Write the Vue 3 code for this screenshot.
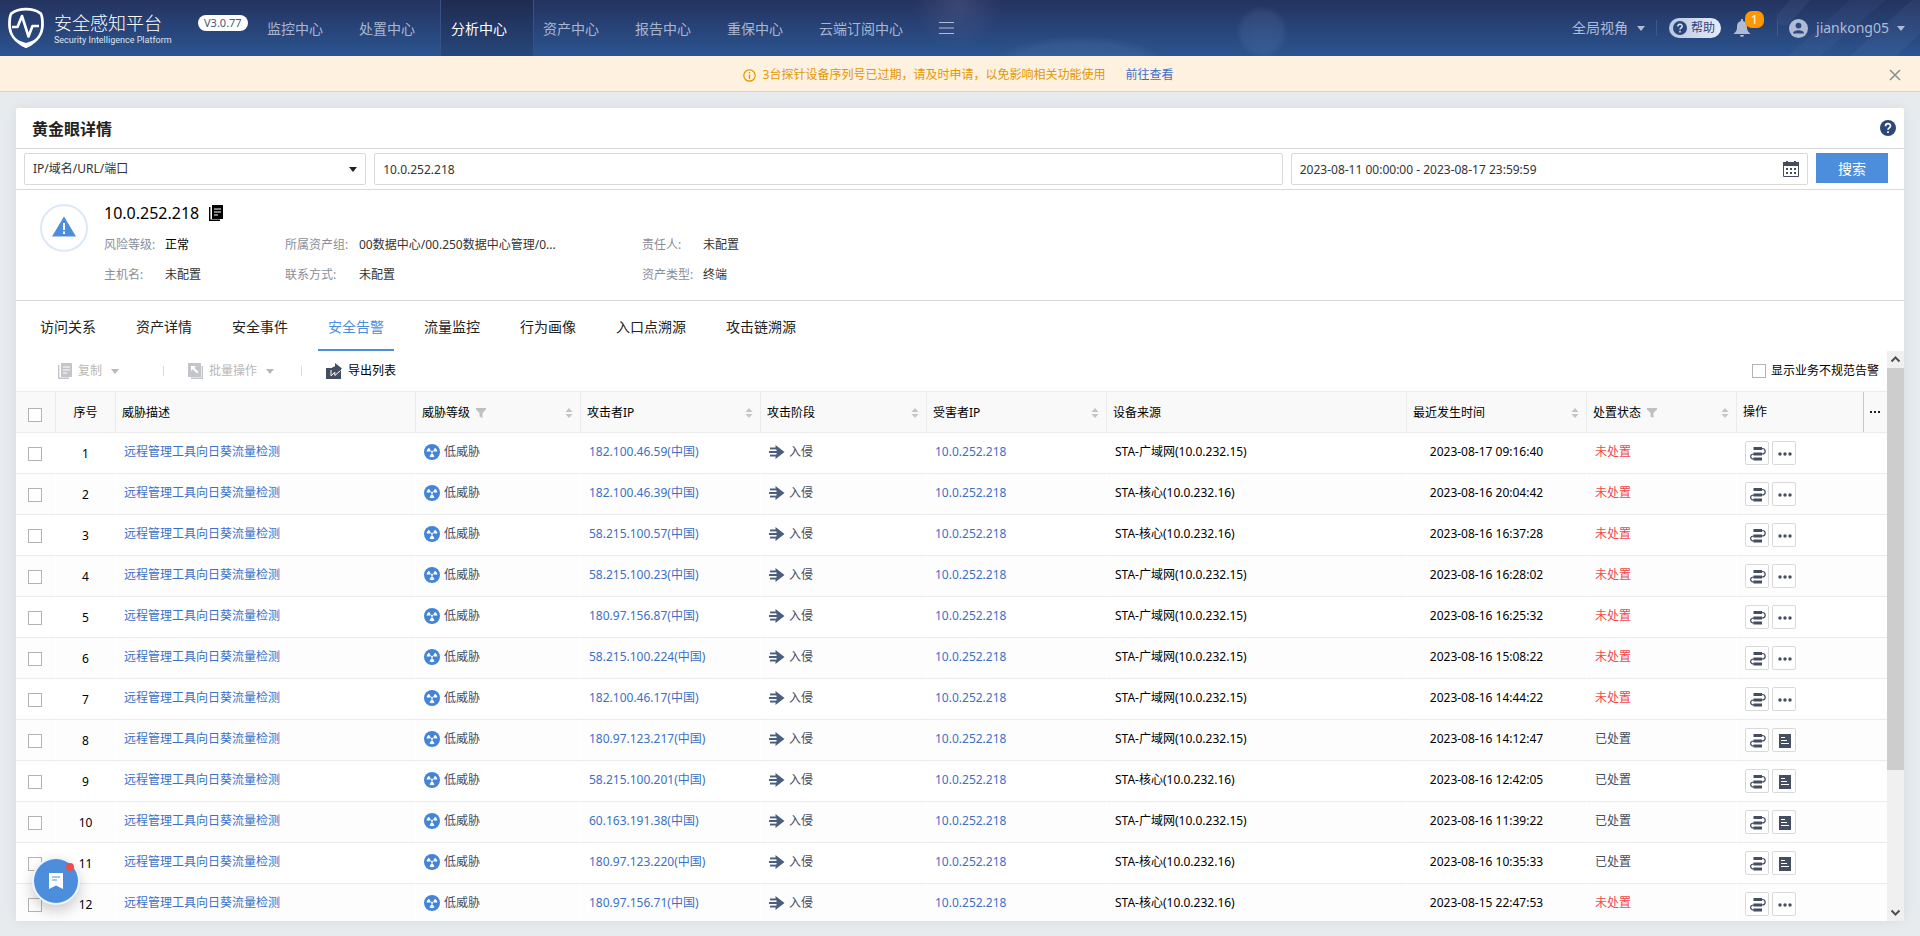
<script setup>
import { ref } from 'vue'

const navItems = ['监控中心', '处置中心', '分析中心', '资产中心', '报告中心', '重保中心', '云端订阅中心']
const activeNav = '分析中心'

const tabs = ['访问关系', '资产详情', '安全事件', '安全告警', '流量监控', '行为画像', '入口点溯源', '攻击链溯源']
const activeTab = ref('安全告警')

const keyword = ref('10.0.252.218')
const period = ref('2023-08-11 00:00:00 - 2023-08-17 23:59:59')

const WAN = 'STA-广域网(10.0.232.15)'
const CORE = 'STA-核心(10.0.232.16)'

const rows = [
  { ip: '182.100.46.59', src: WAN, time: '2023-08-17 09:16:40', done: false },
  { ip: '182.100.46.39', src: CORE, time: '2023-08-16 20:04:42', done: false },
  { ip: '58.215.100.57', src: CORE, time: '2023-08-16 16:37:28', done: false },
  { ip: '58.215.100.23', src: WAN, time: '2023-08-16 16:28:02', done: false },
  { ip: '180.97.156.87', src: WAN, time: '2023-08-16 16:25:32', done: false },
  { ip: '58.215.100.224', src: WAN, time: '2023-08-16 15:08:22', done: false },
  { ip: '182.100.46.17', src: WAN, time: '2023-08-16 14:44:22', done: false },
  { ip: '180.97.123.217', src: WAN, time: '2023-08-16 14:12:47', done: true },
  { ip: '58.215.100.201', src: CORE, time: '2023-08-16 12:42:05', done: true },
  { ip: '60.163.191.38', src: WAN, time: '2023-08-16 11:39:22', done: true },
  { ip: '180.97.123.220', src: CORE, time: '2023-08-16 10:35:33', done: true },
  { ip: '180.97.156.71', src: CORE, time: '2023-08-15 22:47:53', done: false },
]

const columns = [
  { name: '威胁描述' },
  { name: '威胁等级', filter: true, sort: true },
  { name: '攻击者IP', sort: true },
  { name: '攻击阶段', sort: true },
  { name: '受害者IP', sort: true },
  { name: '设备来源' },
  { name: '最近发生时间', sort: true },
  { name: '处置状态', filter: true, sort: true },
]
</script>

<template>
  <div class="page">
    <header class="topbar">
      <svg class="topbar-art" viewBox="0 0 1920 56" preserveAspectRatio="xMaxYMid slice" aria-hidden="true">
        <defs>
          <radialGradient id="glow">
            <stop offset="0" stop-color="#8b7fae" stop-opacity=".22" />
            <stop offset="1" stop-color="#8b7fae" stop-opacity="0" />
          </radialGradient>
          <radialGradient id="orb">
            <stop offset="0" stop-color="#8fb0e0" stop-opacity=".13" />
            <stop offset=".75" stop-color="#8fb0e0" stop-opacity=".1" />
            <stop offset="1" stop-color="#8fb0e0" stop-opacity="0" />
          </radialGradient>
        </defs>
        <circle cx="958" cy="4" r="44" fill="url(#glow)" />
        <circle cx="1262" cy="32" r="26" fill="url(#orb)" />
        <ellipse cx="1080" cy="66" rx="90" ry="30" fill="url(#orb)" />
        <path d="M1784 18 1806-6" stroke="#8fa8dc" stroke-width="15" stroke-linecap="round" opacity=".08" />
        <path d="M1788 56 1850 0H1886L1820 56Z" fill="#8fa8dc" opacity=".06" />
        <path d="M1850 56 1912 0H1920V34L1896 56Z" fill="#8fa8dc" opacity=".08" />
      </svg>
      <div class="brand">
        <svg class="brand-logo" viewBox="0 0 36 42" aria-hidden="true">
          <path d="M18 2.2C12 2.2 6.500 4 3.200 6.600 1.800 9 1.500 13 1.500 17.500 1.500 29 8 35 18 39.500 28 35 34.500 29 34.500 17.500 34.500 13 34.200 9 32.800 6.600 29.500 4 24 2.200 18 2.200Z" fill="none" stroke="#fff" stroke-width="2.800" />
          <path d="M7 31C10 33.500 14 34.800 18 36 22 34.800 26 33.500 29 31L24 38 18 41 12 38Z" fill="#fff" />
          <path d="M4 20H9.500L14 9 20.500 29.500 24.500 19H31" fill="none" stroke="#fff" stroke-width="2.600" stroke-linejoin="round" />
        </svg>
        <div class="brand-text">
          <strong>安全感知平台</strong>
          <span>Security Intelligence Platform</span>
        </div>
        <span class="version">V3.0.77</span>
      </div>
      <nav class="nav">
        <a v-for="item in navItems" :key="item" href="#" :class="{ active: item === activeNav }">{{ item }}</a>
        <button class="nav-more" aria-label="更多菜单">
          <svg width="15" height="12" viewBox="0 0 15 12"><path d="M0 .5H15M0 6H15M0 11.500H15" stroke="currentColor" /></svg>
        </button>
      </nav>
      <div class="tools">
        <button class="view-btn">全局视角 <i class="caret"></i></button>
        <i class="line"></i>
        <button class="help-pill">
          <svg width="14" height="14" viewBox="0 0 16 16"><circle cx="8" cy="8" r="8" fill="#2c4779" /><path d="M5.500 6.200C5.500 2.800 10.500 2.900 10.500 6 10.500 7.800 8 8 8 9.800M8 11.200V13" fill="none" stroke="#dbe4f5" stroke-width="1.700" /></svg>
          帮助
        </button>
        <button class="bell" aria-label="通知">
          <svg width="18" height="18" viewBox="0 0 18 18"><path d="M8 0H10V2C13.500 3 14 5.500 14 9 14 12 16 13 17.500 15H.5C2 13 4 12 4 9 4 5.500 4.500 3 8 2ZM7 16H11C11 18.500 7 18.500 7 16Z" fill="currentColor" /></svg>
          <span class="badge">1</span>
        </button>
        <i class="line"></i>
        <button class="user">
          <svg width="19" height="19" viewBox="0 0 19 19"><circle cx="9.500" cy="9.500" r="9.500" fill="currentColor" /><circle cx="9.500" cy="6.600" r="2.900" fill="#2b4a81" /><path d="M4 14.500C4 10.300 15 10.300 15 14.500Z" fill="#2b4a81" /></svg>
          jiankong05 <i class="caret"></i>
        </button>
      </div>
    </header>

    <div class="notice" role="alert">
      <svg width="13" height="13" viewBox="0 0 13 13"><circle cx="6.500" cy="6.500" r="5.700" fill="none" stroke="currentColor" stroke-width="1.200" /><path d="M6.500 3V4.300M6.500 5.500V10" stroke="currentColor" stroke-width="1.400" /></svg>
      <span>3台探针设备序列号已过期，请及时申请，以免影响相关功能使用</span>
      <a href="#">前往查看</a>
      <button class="notice-close" aria-label="关闭">
        <svg width="12" height="12" viewBox="0 0 12 12"><path d="M1 1 11 11M11 1 1 11" stroke="currentColor" stroke-width="1.600" /></svg>
      </button>
    </div>

    <main class="card">
      <div class="card-title">
        <h1>黄金眼详情</h1>
        <button class="plain" aria-label="帮助说明">
          <svg width="16" height="16" viewBox="0 0 16 16"><circle cx="8" cy="8" r="8" fill="#2c4779" /><path d="M5.500 6.200C5.500 2.800 10.500 2.900 10.500 6 10.500 7.800 8 8 8 9.800M8 11.200V13" fill="none" stroke="#fff" stroke-width="1.700" /></svg>
        </button>
      </div>

      <form class="search" @submit.prevent>
        <div class="field type">
          <select aria-label="搜索类型"><option>IP/域名/URL/端口</option></select>
          <i class="caret dark"></i>
        </div>
        <div class="field key"><input v-model="keyword" type="text" aria-label="关键字" /></div>
        <div class="field range">
          <input v-model="period" type="text" aria-label="时间范围" />
          <svg width="16" height="16" viewBox="0 0 16 16"><path d="M.5 1.500H15.500V15.500H.5Z" fill="none" stroke="#454d60" /><path d="M0 1H16V5H0ZM3 0H5V2H3ZM11 0H13V2H11Z" fill="#454d60" /><path d="M3 8H13M3 12H13" stroke="#454d60" stroke-width="2" stroke-dasharray="2 2" /></svg>
        </div>
        <button type="submit">搜索</button>
      </form>

      <section class="info">
        <div class="info-icon">
          <svg width="24" height="21" viewBox="0 0 24 21"><path d="M12 .5 24 20.500H0Z" fill="#4d8edc" /><path d="M12 7V14M12 15.500V18" stroke="#fff" stroke-width="2" /></svg>
        </div>
        <div class="info-body">
          <div class="info-ip">
            10.0.252.218
            <button class="plain" aria-label="复制IP">
              <svg width="14" height="16" viewBox="0 0 14 16"><path d="M3 0H14V14H3Z" fill="#000" /><path d="M.7 2V15.300H11" fill="none" stroke="#000" stroke-width="1.400" /><path d="M5 4H12M5 7H12M5 10H9" stroke="#fff" stroke-width="1.200" /></svg>
            </button>
          </div>
          <dl>
            <div><dt>风险等级:</dt><dd class="strong">正常</dd></div>
            <div class="group"><dt>所属资产组:</dt><dd>00数据中心/00.250数据中心管理/0...</dd></div>
            <div><dt>责任人:</dt><dd>未配置</dd></div>
            <div><dt>主机名:</dt><dd>未配置</dd></div>
            <div class="group"><dt>联系方式:</dt><dd>未配置</dd></div>
            <div><dt>资产类型:</dt><dd>终端</dd></div>
          </dl>
        </div>
      </section>

      <div class="tabs" role="tablist">
        <button v-for="tab in tabs" :key="tab" role="tab" :aria-selected="tab === activeTab" :class="{ active: tab === activeTab }" @click="activeTab = tab">{{ tab }}</button>
      </div>

      <div class="viewport">
        <div class="content">
          <div class="toolbar">
            <button class="copy" disabled>
              <svg width="14" height="16" viewBox="0 0 14 16"><path d="M3 0H14V14H3Z" fill="#c3c5cb" /><path d="M.7 2V15.300H11" fill="none" stroke="#c3c5cb" stroke-width="1.400" /><path d="M5 4H12M5 7H12M5 10H9" stroke="#fff" stroke-width="1.200" /></svg>
              复制 <i class="caret"></i>
            </button>
            <i class="line"></i>
            <button class="batch" disabled>
              <svg width="15" height="16" viewBox="0 0 15 16"><path d="M0 0H13V14H0Z" fill="#c3c5cb" /><path d="M3 15.300H14.300V3" fill="none" stroke="#c3c5cb" stroke-width="1.400" /><path d="M3 3H8L6.300 4.700 10.500 9 9 10.500 4.700 6.300 3 8Z" fill="#fff" /></svg>
              批量操作 <i class="caret"></i>
            </button>
            <i class="line"></i>
            <button class="export">
              <svg width="16" height="16" viewBox="0 0 16 16"><path d="M0 5H15V16H0Z" fill="#454d60" /><path d="M3.500 0H16V11H15V5H8V5H3.500Z" fill="#fff" /><path d="M5.500 12.500V7C5.500 4.500 7 3.500 9 3.500V0L16 5.500 9 11.500V8.500C7.500 8.500 6.500 10 5.500 12.500Z" fill="#454d60" /><path d="M5 7V12.800L8.800 9.200V12.500L14.500 7.500" fill="none" stroke="#fff" /></svg>
              导出列表
            </button>
            <label class="irregular"><input type="checkbox" />显示业务不规范告警</label>
          </div>

          <table>
            <colgroup>
              <col class="c-check" /><col class="c-no" /><col class="c-desc" /><col class="c-level" /><col class="c-ip" />
              <col class="c-phase" /><col class="c-ip" /><col class="c-src" /><col class="c-time" /><col class="c-state" /><col />
            </colgroup>
            <thead>
              <tr>
                <th class="check"><input type="checkbox" aria-label="全选" /></th>
                <th class="no">序号</th>
                <th v-for="col in columns" :key="col.name">
                  <div class="head">
                    {{ col.name }}
                    <svg v-if="col.filter" width="10" height="10" viewBox="0 0 10 10"><path d="M0 0H10V1.500L6.500 5V10L3.500 8.500V5L0 1.500Z" fill="#c0c0c0" /></svg>
                    <svg v-if="col.sort" class="sort" width="8" height="10" viewBox="0 0 8 10"><path d="M4 0 7.500 4H.5ZM4 10 .5 6H7.500Z" fill="#c4c4c4" /></svg>
                  </div>
                </th>
                <th class="last">
                  <div class="head">
                    操作
                    <button class="cols" aria-label="列设置"><svg width="10" height="2" viewBox="0 0 10 2"><path d="M0 0H2V2H0ZM4 0H6V2H4ZM8 0H10V2H8Z" fill="#222" /></svg></button>
                  </div>
                </th>
              </tr>
            </thead>
            <tbody>
              <tr v-for="(row, i) in rows" :key="row.time">
                <td class="check"><input type="checkbox" :aria-label="'选择第' + (i + 1) + '行'" /></td>
                <td class="no">{{ i + 1 }}</td>
                <td><a href="#">远程管理工具向日葵流量检测</a></td>
                <td>
                  <span class="tag">
                    <svg width="16" height="16" viewBox="0 0 16 16"><circle cx="8" cy="8" r="8" fill="#4384d8" /><circle cx="8" cy="7.800" r="1.100" fill="#fff" /><path d="M6.900 6.700 5 3.700C3.500 4.600 2.700 5.900 2.600 7.600H6.200ZM9.100 6.700 11 3.700C12.500 4.600 13.300 5.900 13.400 7.600H9.800ZM7.200 9.400 5.500 12.600C7 13.400 9 13.400 10.500 12.600L8.800 9.400Z" fill="#fff" /></svg>
                    低威胁
                  </span>
                </td>
                <td><a href="#">{{ row.ip }}(中国)</a></td>
                <td>
                  <span class="tag phase">
                    <svg width="16" height="14" viewBox="0 0 16 14"><path d="M6.500 0 15.500 7 6.500 14V11.500L10 7.900H0V6.100H10L6.500 2.500Z" fill="#4a5f80" /><path d="M7 1.500 14 7 7 12.500Z" fill="#4a5f80" /><path d="M1 3.500H8M1 10.500H8" stroke="#4a5f80" stroke-width="1.800" /><path d="M0 5.200H8M0 8.800H8" stroke="#fff" stroke-width=".8" /></svg>
                    入侵
                  </span>
                </td>
                <td><a href="#">10.0.252.218</a></td>
                <td>{{ row.src }}</td>
                <td class="time">{{ row.time }}</td>
                <td :class="row.done ? 'done' : 'pending'">{{ row.done ? '已处置' : '未处置' }}</td>
                <td class="ops">
                  <div>
                    <button aria-label="溯源">
                      <svg width="16" height="14" viewBox="0 0 16 14"><path d="M3.500 0H12V3H3.500ZM3.500 5.500H12V8.500H3.500ZM3.500 10.500H12V13.500H3.500Z" fill="#454d60" /><path d="M12 1.500C16.300 1.500 16.300 7 12 7M4 7C-.5 7-.5 12 4 12" fill="none" stroke="#454d60" stroke-width="1.200" /></svg>
                    </button>
                    <button v-if="row.done" aria-label="处置记录">
                      <svg width="12" height="14" viewBox="0 0 12 14"><path d="M0 0H12V14H0Z" fill="#454d60" /><path d="M2 3.500H6M2 6.500H8M2 9.500H10" stroke="#fff" /></svg>
                    </button>
                    <button v-else aria-label="更多">
                      <svg width="14" height="4" viewBox="0 0 14 4"><circle cx="2" cy="2" r="1.700" fill="#454d60" /><circle cx="7" cy="2" r="1.700" fill="#454d60" /><circle cx="12" cy="2" r="1.700" fill="#454d60" /></svg>
                    </button>
                  </div>
                </td>
              </tr>
            </tbody>
          </table>
        </div>

        <div class="scrollbar" aria-hidden="true">
          <svg width="17" height="17" viewBox="0 0 17 17"><path d="M4.500 10.500 8.500 6.500 12.500 10.500" fill="none" stroke="#505050" stroke-width="2" /></svg>
          <div class="track"><div class="thumb"></div></div>
          <svg width="17" height="17" viewBox="0 0 17 17"><path d="M4.500 6.500 8.500 10.500 12.500 6.500" fill="none" stroke="#505050" stroke-width="2" /></svg>
        </div>
      </div>
    </main>

    <button class="float-btn" aria-label="消息">
      <svg width="14" height="16" viewBox="0 0 14 16"><path d="M0 0H14V16L7 12.500 0 16Z" fill="#fff" /><path d="M3 4H11M3 7H8" stroke="#4d8edc" /></svg>
      <i></i>
    </button>
  </div>
</template>

<style>
body {
  background: #e7ebee;
}
</style>

<style scoped>
.page {
  display: flex;
  flex-direction: column;
  height: 100vh;
  font: 12px/20px "Noto Sans", "Noto Sans CJK SC", sans-serif;
  color: #222;
}
.page *,
.page {
  box-sizing: border-box;
}
button {
  margin: 0;
  padding: 0;
  border: 0;
  background: none;
  font: inherit;
  color: inherit;
}
a {
  color: #3c70c6;
  text-decoration: none;
}
svg {
  display: block;
  flex: none;
}
.plain {
  display: block;
}
.caret {
  border: 4px solid transparent;
  border-top: 5px solid currentColor;
  border-bottom: 0;
}
.line {
  width: 1px;
}

/* top bar */
.topbar {
  position: relative;
  flex: none;
  display: flex;
  height: 56px;
  background: linear-gradient(#24335f, #2c5491);
  color: #b0bcd4;
}
.topbar-art {
  position: absolute;
  inset: 0;
  width: 100%;
  height: 100%;
}
.brand {
  position: relative;
  display: flex;
  width: 257px;
  padding: 7px 0 0 8px;
  color: #fff;
}
.brand-logo {
  width: 36px;
  height: 42px;
}
.brand-text {
  flex: none;
  display: flex;
  flex-direction: column;
  width: 146px;
  padding-left: 10px;
}
.brand-text strong {
  font-weight: 300;
  font-size: 18px;
  line-height: 26px;
  padding-top: 3px;
}
.brand-text span {
  font: 9px/9px Roboto, sans-serif;
  white-space: nowrap;
  color: #dfe5f0;
}
.version {
  height: 16px;
  margin: 8px 0 0 8px;
  padding: 0 6px;
  border-radius: 8px;
  background: #fff;
  color: #4b5876;
  font-size: 11px;
  line-height: 16px;
}
.nav {
  position: relative;
  display: flex;
  font-size: 14px;
}
.nav a {
  height: 56px;
  padding: 0 26px 0 10px;
  line-height: 57px;
  color: #a9b6d0;
}
.nav a.active {
  background: linear-gradient(#1f2b50, #26477b);
  box-shadow: -1px 0 #375285, 1px 0 #375285;
  color: #fff;
}
.nav-more {
  height: 56px;
  padding-left: 10px;
}
.tools {
  position: relative;
  display: flex;
  align-items: center;
  height: 56px;
  margin-left: auto;
  padding-right: 15px;
  font-size: 14px;
}
.tools button {
  display: flex;
  align-items: center;
}
.tools .line {
  height: 16px;
  background: #3c588c;
}
.view-btn {
  gap: 9px;
  margin-right: 11px;
}
.tools .help-pill {
  gap: 4px;
  height: 20px;
  margin: 0 12px;
  padding: 0 6px 0 4px;
  border-radius: 10px;
  background: linear-gradient(90deg, #b9c7e2, #e6ecf8);
  color: #2c4779;
  font-size: 12px;
  line-height: 20px;
}
.bell {
  position: relative;
  margin-right: 26px;
}
.badge {
  position: absolute;
  left: 12px;
  top: -8px;
  width: 19px;
  height: 17px;
  border-radius: 7px;
  background: #ff9800;
  color: #fff;
  font-size: 12px;
  line-height: 17px;
  text-align: center;
}
.user {
  gap: 8px;
  padding-left: 11px;
}

/* notice */
.notice {
  position: relative;
  flex: none;
  display: flex;
  align-items: center;
  justify-content: center;
  height: 36px;
  padding-top: 3px;
  padding-right: 4px;
  border-bottom: 1px solid #ffd666;
  background: #fff1e0;
  color: #e29700;
}
.notice span {
  margin: 0 20px 0 7px;
}
.notice-close {
  position: absolute;
  right: 19px;
  top: 13px;
  color: #8f8f8f;
}

/* card */
.card {
  flex: 1;
  min-height: 0;
  display: flex;
  flex-direction: column;
  margin: 16px 16px 15px;
  border-radius: 2px;
  background: #fff;
  box-shadow: 0 0 12px rgba(60, 80, 100, 0.09);
}
.card-title {
  flex: none;
  display: flex;
  align-items: center;
  justify-content: space-between;
  height: 41px;
  padding: 0 8px 0 16px;
  border-bottom: 1px solid #d9d9d9;
}
h1 {
  margin: 0;
  padding-top: 2px;
  font-size: 16px;
  line-height: 24px;
}
.search {
  flex: none;
  display: flex;
  gap: 8px;
  height: 41px;
  padding: 4px 16px 4px 8px;
  border-bottom: 1px solid #d9d9d9;
}
.field {
  display: flex;
  align-items: center;
  min-width: 0;
  height: 32px;
  padding: 0 8px;
  border: 1px solid #d9d9d9;
  border-radius: 2px;
}
.type { flex: 324 1 0; }
.key { flex: 890 1 0; }
.range { flex: 499 1 0; }
.type .caret {
  color: #222;
  pointer-events: none;
}
.field input,
.field select {
  flex: 1;
  min-width: 0;
  height: 28px;
  padding: 0;
  border: 0;
  outline: 0;
  appearance: none;
  background: none;
  font: inherit;
  color: #333;
}
.search > button {
  width: 72px;
  height: 30px;
  padding-top: 2px;
  background: #4d8edc;
  color: #fff;
  font-size: 14px;
}

/* asset summary */
.info {
  flex: none;
  display: flex;
  height: 111px;
  padding: 14px 24px 0;
  border-bottom: 1px solid #d9d9d9;
}
.info-icon {
  display: flex;
  align-items: center;
  justify-content: center;
  width: 48px;
  height: 48px;
  margin-right: 16px;
  padding-bottom: 4px;
  border: 2px solid #dce8f7;
  border-radius: 50%;
}
.info-ip {
  display: flex;
  align-items: center;
  gap: 10px;
  margin-top: -3px;
  font-size: 16px;
  line-height: 24px;
  color: #000;
}
dl {
  display: grid;
  grid-template-columns: 181px 357px auto;
  row-gap: 10px;
  margin: 10px 0 0;
}
dl div {
  display: flex;
}
dt {
  width: 61px;
  color: #8a8e99;
}
.group dt {
  width: 74px;
}
dd {
  margin: 0;
  color: #333;
}
dd.strong {
  color: #000;
}

/* tabs */
.tabs {
  flex: none;
  display: flex;
  gap: 20px;
  height: 50px;
  padding: 0 14px;
  font-size: 14px;
}
.tabs button {
  height: 50px;
  padding: 3px 10px 0;
  border-bottom: 2px solid transparent;
}
.tabs button.active {
  border-color: #4d8edc;
  color: #4d8edc;
}

/* scrolling area */
.viewport {
  flex: 1;
  min-height: 0;
  display: flex;
  overflow: hidden;
}
.content {
  flex: 1;
  min-width: 0;
}
.scrollbar {
  display: flex;
  flex-direction: column;
  width: 17px;
  background: #f0f0f0;
}
.track {
  flex: 1;
}
.thumb {
  height: 75%;
  background: #cdcdcd;
}
.toolbar {
  display: flex;
  align-items: center;
  height: 40px;
  padding: 0 8px 0 42px;
}
.toolbar button {
  display: flex;
  align-items: center;
  gap: 6px;
  color: #000;
}
.toolbar button:disabled {
  color: #b8b8b8;
}
.toolbar .caret {
  margin-left: 3px;
}
.toolbar .line {
  height: 10px;
  background: #d9d9d9;
}
.copy { width: 105px; }
.batch { width: 137px; padding-left: 24px; }
.export { padding-left: 24px; }
.irregular {
  display: flex;
  align-items: center;
  gap: 5px;
  margin-left: auto;
  color: #000;
}
input[type="checkbox"] {
  appearance: none;
  display: block;
  width: 14px;
  height: 14px;
  margin: 0;
  border: 1px solid #b3b3b3;
  background: #fff;
}

/* table */
table {
  width: 100%;
  table-layout: fixed;
  border-collapse: separate;
  border-spacing: 0;
  color: #000;
}
.c-check { width: 40px; }
.c-no { width: 60px; }
.c-desc { width: 300px; }
.c-level { width: 165px; }
.c-ip { width: 180px; }
.c-phase { width: 166px; }
.c-src { width: 300px; }
.c-time { width: 180px; }
.c-state { width: 150px; }
th {
  height: 42px;
  padding: 2px 0 0 6px;
  border: solid #ebebeb;
  border-width: 1px 1px 1px 0;
  background: #f9f9f9;
  font-weight: 400;
  text-align: left;
}
th.last {
  padding-top: 0;
  border-right: 0;
}
.head {
  display: flex;
  align-items: center;
  gap: 6px;
}
.sort {
  margin: 0 7px 0 auto;
}
.cols {
  display: flex;
  align-items: center;
  width: 24px;
  height: 40px;
  margin-left: auto;
  padding-left: 6px;
  border-left: 1px solid #c8c8c8;
}
td {
  height: 41px;
  padding: 0 8px 2px;
  border-right: 1px solid #fff;
  border-bottom: 1px solid #ebebeb;
  white-space: nowrap;
}
tbody tr:nth-child(even) td {
  background: #fdfdfd;
}
td:last-child {
  border-right: 0;
}
th.check {
  padding: 5px 0 0 12px;
}
td.check {
  padding: 2px 0 0 12px;
}
th.no {
  padding: 2px 0 0;
  text-align: center;
}
td.no {
  padding: 2px 0 0;
  text-align: center;
}
td.time {
  padding-right: 28px;
  text-align: center;
}
td.ops {
  padding: 0 8px;
}
.tag {
  display: flex;
  align-items: center;
  gap: 4px;
  color: #454d60;
}
.pending {
  color: #f0484b;
}
.done {
  color: #454d60;
}
.ops div {
  display: flex;
  gap: 3px;
}
.ops button {
  display: flex;
  align-items: center;
  justify-content: center;
  width: 24px;
  height: 24px;
  padding: 2px 0 0 2px;
  border: 1px solid #d9d9d9;
  border-radius: 2px;
  background: #fff;
}

/* floating message button */
.float-btn {
  position: fixed;
  left: 34px;
  bottom: 33px;
  display: flex;
  align-items: center;
  justify-content: center;
  width: 44px;
  height: 44px;
  border-radius: 50%;
  background: #4d8edc;
  box-shadow: 0 0 0 2px #eef4fc, 0 6px 14px 2px rgba(0, 0, 0, 0.2);
}
.float-btn i {
  position: absolute;
  right: 4px;
  top: 4px;
  width: 8px;
  height: 8px;
  border-radius: 50%;
  background: #f04b4b;
}
</style>
